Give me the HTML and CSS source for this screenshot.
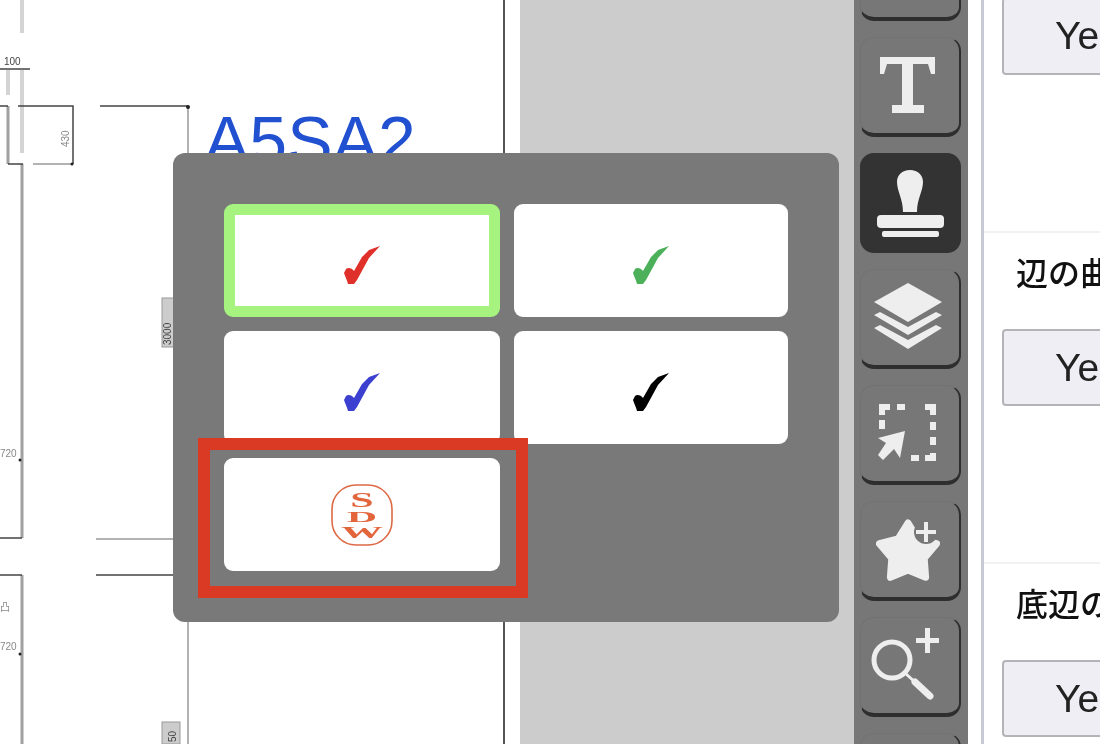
FILE: index.html
```html
<!DOCTYPE html>
<html lang="ja">
<head>
<meta charset="utf-8">
<title>Stamp picker</title>
<link rel="stylesheet" href="styles.css">
</head>
<body>
<div class="app">
  <main class="canvas">
    <svg class="drawing" width="503" height="744" viewBox="0 0 503 744">
      <g class="pale">
        <path d="M22 0V33M22 70V153M8 70V95"/>
      </g>
      <g class="wall">
        <path d="M8 106V164M22 164V538M22 575V744"/>
      </g>
      <g class="ink">
        <path d="M0 69H30M0 106H8M18 106H73V164M8 164H23M100 106H188M0 538H22M0 575H22M96 575H173"/>
      </g>
      <g class="thin">
        <path d="M33 164H73M188 106V153M188 622V744M96 539H173"/>
      </g>
      <circle class="dot" cx="188" cy="107" r="2"/>
      <circle class="dot" cx="72" cy="164" r="1.5"/>
      <circle class="dot" cx="20" cy="460" r="1.5"/>
      <circle class="dot" cx="20" cy="654" r="1.5"/>
      <text class="dim" x="4" y="65">100</text>
      <text class="dim dim-light" x="0" y="457">720</text>
      <text class="dim dim-light" x="0" y="611">凸</text>
      <text class="dim dim-light" x="0" y="650">720</text>
      <text class="dim dim-light" transform="translate(69 147) rotate(-90)">430</text>
      <rect class="tag" x="162" y="298" width="12" height="49"/>
      <text class="dim" transform="translate(171 345) rotate(-90)">3000</text>
      <rect class="tag" x="162" y="722" width="18" height="22"/>
      <text class="dim" transform="translate(176 742) rotate(-90)">50</text>
      <text class="model" x="204" y="164">A5SA2</text>
    </svg>
  </main>
  <div class="gutter"></div>
  <div class="backdrop"></div>

  <nav class="toolbar">
    <button class="tool"></button>
    <button class="tool">
      <svg class="icon" viewBox="0 0 100 100"><path d="M20 20H75V37H71L68 27H53V68H64V76H32V68H42V27H27L24 37H20Z"/></svg>
    </button>
    <button class="tool tool-active">
      <svg class="icon" viewBox="0 0 100 100"><path d="M50 17C42 17 37 22 37 29C37 38 43 46 43 59H57C57 46 63 38 63 29C63 22 58 17 50 17Z"/><rect x="17" y="62" width="67" height="13" rx="4"/><rect x="22" y="78" width="57" height="6" rx="2"/></svg>
    </button>
    <button class="tool">
      <svg class="icon" viewBox="0 0 100 100"><path d="M48 14L82 33L48 53L14 33Z"/><path d="M14 46L20 43L48 58L76 43L82 46L48 66Z"/><path d="M14 59L20 56L48 71L76 56L82 59L48 80Z"/></svg>
    </button>
    <button class="tool">
      <svg class="icon" viewBox="0 0 100 100"><path d="M19 19H30V25H25V30H19Z"/><rect x="37" y="19" width="8" height="6"/><path d="M65 19H76V30H70V25H65Z"/><rect x="70" y="37" width="6" height="8"/><rect x="70" y="52" width="6" height="8"/><path d="M70 68H76V76H65V70H70Z"/><rect x="51" y="70" width="8" height="6"/><rect x="19" y="35" width="6" height="9"/><path d="M45 46L18 53L26 58L18 70L23 75L34 64L40 73Z"/></svg>
    </button>
    <button class="tool">
      <svg class="icon" viewBox="0 0 100 100"><path class="star" d="M48 22L58 38L76.500 42.700L64.200 57.300L65.600 76.300L48 69L30.400 76.300L31.800 57.300L19.500 42.700L38 38Z"/><circle class="cutout" cx="66" cy="31" r="12"/><path d="M64 21H68V29H76V33H68V41H64V33H56V29H64Z"/></svg>
    </button>
    <button class="tool">
      <svg class="icon" viewBox="0 0 100 100"><circle class="lens" cx="32" cy="43" r="18"/><path class="neck" d="M45 56L56 66"/><path class="handle" d="M55 65L70 79"/><path d="M65 11H70V21H79V26H70V36H65V26H56V21H65Z"/></svg>
    </button>
    <button class="tool"></button>
  </nav>

  <div class="gutter-right"></div>

  <aside class="panel">
    <section class="section section-first">
      <button class="choice">Yes</button>
    </section>
    <section class="section">
      <h3 class="label">辺の曲げ</h3>
      <button class="choice">Yes</button>
    </section>
    <section class="section">
      <h3 class="label">底辺の曲げ</h3>
      <button class="choice">Yes</button>
    </section>
  </aside>

  <div class="popup">
    <div class="cell cell-selected">
      <svg class="check check-red" viewBox="0 0 36 38"><path d="M36 0L25 4L18 11L10 25C8 22 4 21 2 23L0 27C1 30 3 34 4 38H10L13 34L25 12Z"/></svg>
    </div>
    <div class="cell">
      <svg class="check check-green" viewBox="0 0 36 38"><path d="M36 0L25 4L18 11L10 25C8 22 4 21 2 23L0 27C1 30 3 34 4 38H10L13 34L25 12Z"/></svg>
    </div>
    <div class="cell">
      <svg class="check check-blue" viewBox="0 0 36 38"><path d="M36 0L25 4L18 11L10 25C8 22 4 21 2 23L0 27C1 30 3 34 4 38H10L13 34L25 12Z"/></svg>
    </div>
    <div class="cell">
      <svg class="check check-black" viewBox="0 0 36 38"><path d="M36 0L25 4L18 11L10 25C8 22 4 21 2 23L0 27C1 30 3 34 4 38H10L13 34L25 12Z"/></svg>
    </div>
    <div class="cell">
      <svg class="seal" viewBox="0 0 62 62">
        <rect class="seal-ring" x="1" y="1" width="60" height="60" rx="24"/>
        <text class="seal-letter" transform="translate(31 23) scale(2.1 1)">S</text>
        <text class="seal-letter" transform="translate(31 38) scale(2.1 .75)">D</text>
        <text class="seal-letter" transform="translate(31 54) scale(2.1 .8)">W</text>
      </svg>
    </div>
  </div>
  <div class="highlight"></div>
</div>
</body>
</html>
```
FILE: styles.css
```css
* { box-sizing: border-box; }
html, body { margin: 0; height: 100%; background: #fff; }
body { font-family: "Liberation Sans", "Noto Sans CJK JP", sans-serif; overflow: hidden; }

.app {
  position: relative;
  display: flex;
  width: 1100px;
  height: 744px;
  overflow: hidden;
  background: #fff;
}

.canvas {
  flex: 0 0 505px;
  height: 744px;
  border-right: 2px solid #555;
  background: #fff;
}
.drawing { display: block; filter: blur(.7px); }
.drawing path { fill: none; }
.pale path { stroke: #d4d4d4; stroke-width: 4; }
.wall path { stroke: #a0a0a0; stroke-width: 3; }
.ink path { stroke: #444; stroke-width: 1.5; }
.thin path { stroke: #999; stroke-width: 1.5; }
.dot { fill: #222; }
.dim { font: 10px "Liberation Sans", "Noto Sans CJK JP", sans-serif; fill: #444; }
.dim-light { fill: #888; }
.tag { fill: #ccc; stroke: #999; }
.model { font: 68px "Liberation Sans", sans-serif; fill: #2150d0; }

.gutter { flex: 0 0 15px; }
.backdrop { flex: 0 0 334px; background: #ccc; }

.toolbar {
  flex: 0 0 114px;
  height: 744px;
  background: #777;
  display: flex;
  flex-direction: column;
  gap: 16px;
  padding-left: 6px;
  overflow: hidden;
}
.tool {
  flex: 0 0 100px;
  width: 101px;
  padding: 0;
  background: #777;
  border-style: solid;
  border-width: 1px 2px 4px 1px;
  border-color: #727272 #2e2e2e #2e2e2e #727272;
  border-radius: 14px;
  overflow: visible;
}
.tool:first-child { margin-top: -79px; }
.tool-active { background: #333; border-color: #333; }
.icon { display: block; width: 100px; height: 100px; margin: -1px -2px -4px -1px; filter: blur(.4px); }
.icon path, .icon rect { fill: #eee; }
.icon .star { stroke: #eee; stroke-width: 7; stroke-linejoin: round; }
.icon .cutout { fill: #777; }
.icon .lens { fill: none; stroke: #eee; stroke-width: 5; }
.icon .neck { fill: none; stroke: #eee; stroke-width: 3; }
.icon .handle { fill: none; stroke: #eee; stroke-width: 7; stroke-linecap: round; }

.gutter-right { flex: 0 0 13px; }

.panel {
  flex: 1 1 auto;
  min-width: 0;
  height: 744px;
  border-left: 3px solid #c9c9d4;
  overflow: hidden;
}
.section {
  height: 331px;
  padding: 16px 0 0 18px;
  border-bottom: 2px solid #f1f1f1;
  overflow: hidden;
}
.section-first { height: 235px; margin-top: -2px; padding-top: 0; overflow: visible; }
.label {
  margin: 0 0 35px 14px;
  height: 45px;
  width: 200px;
  font: 500 32px/45px "Noto Sans CJK JP", sans-serif;
  color: #111;
  white-space: nowrap;
  filter: blur(.4px);
}
.choice {
  display: block;
  width: 260px;
  height: 77px;
  padding: 0 0 0 51px;
  text-align: left;
  font: 39px "Liberation Sans", sans-serif;
  color: #222;
  background: #eeeef4;
  border: 2px solid #b4b4b8;
  border-radius: 4px;
  filter: blur(.3px);
}
.section-first .choice { border-top: 0; }

.popup {
  position: absolute;
  left: 173px;
  top: 153px;
  width: 666px;
  height: 469px;
  padding: 51px 0 0 51px;
  background: #797979;
  border-radius: 12px;
  display: grid;
  grid-template-columns: 276px 274px;
  grid-template-rows: repeat(3, 113px);
  gap: 14px;
}
.cell {
  display: flex;
  align-items: center;
  justify-content: center;
  background: #fff;
  border-radius: 9px;
}
.cell-selected { border: 11px solid #a6f47f; }
.check { width: 36px; height: 38px; margin-top: 8px; filter: blur(.4px); }
.check-red path { fill: #e0302a; }
.check-green path { fill: #4cb05a; }
.check-blue path { fill: #3c40d0; }
.check-black path { fill: #000; }
.seal { width: 62px; height: 62px; filter: blur(.4px); }
.seal-ring { fill: none; stroke: #dd6a45; stroke-width: 1.6; }
.seal-letter { font: 700 20px "Liberation Serif", serif; fill: #e2653c; text-anchor: middle; }

.highlight {
  position: absolute;
  left: 198px;
  top: 438px;
  width: 330px;
  height: 160px;
  border: 12px solid #da3a24;
}
```
